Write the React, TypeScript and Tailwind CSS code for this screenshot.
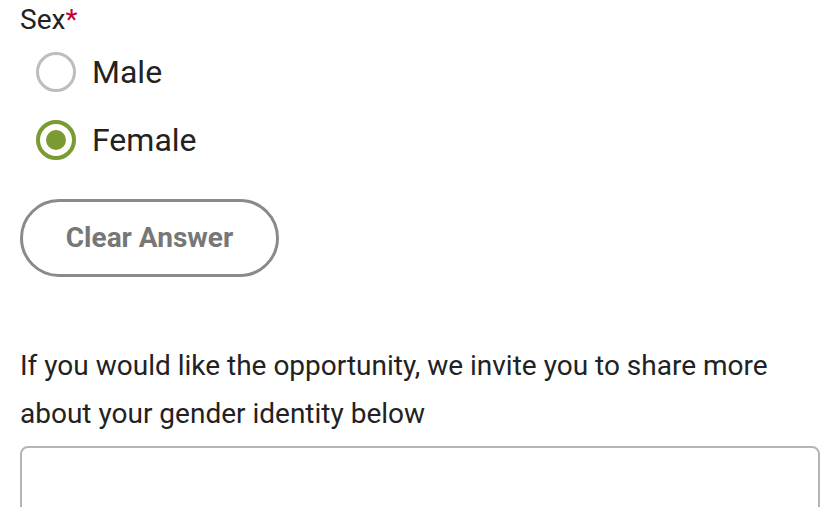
import { useState } from "react";

const options = ["Male", "Female"];

export default function App() {
  const [sex, setSex] = useState<string | null>("Female");

  return (
    <div className="min-h-screen bg-white pl-5 pr-3 font-['Roboto',sans-serif] text-[#222]">
      <div className="text-[28px] leading-[40px]">
        Sex<span className="text-[#c4003b]">*</span>
      </div>

      <div className="flex flex-col gap-[28px] pl-4 pt-[12px]">
        {options.map((option) => {
          const checked = sex === option;
          return (
            <label key={option} className="flex h-[40px] cursor-pointer items-center gap-4">
              <span
                className={
                  checked
                    ? "flex size-[40px] items-center justify-center rounded-full border-[4px] border-[#7a9a32]"
                    : "flex size-[40px] items-center justify-center rounded-full border-[3px] border-[#bdbdbd]"
                }
                onClick={() => setSex(option)}
              >
                {checked ? <span className="size-[20px] rounded-full bg-[#7a9a32]" /> : null}
              </span>
              <span className="text-[32px] leading-none">{option}</span>
            </label>
          );
        })}
      </div>

      <button
        className="mt-[39px] flex h-[78px] w-[259px] items-center justify-center rounded-full border-[3px] border-[#8a8a8a] text-[28px] font-bold text-[#777]"
        onClick={() => setSex(null)}
      >
        Clear Answer
      </button>

      <p className="mt-[65px] text-[28px] leading-[48px]">
        If you would like the opportunity, we invite you to share more about your gender identity below
      </p>

      <textarea className="mt-[8px] h-[120px] w-[800px] rounded-[8px] border-2 border-[#b5b5b5]" />
    </div>
  );
}
